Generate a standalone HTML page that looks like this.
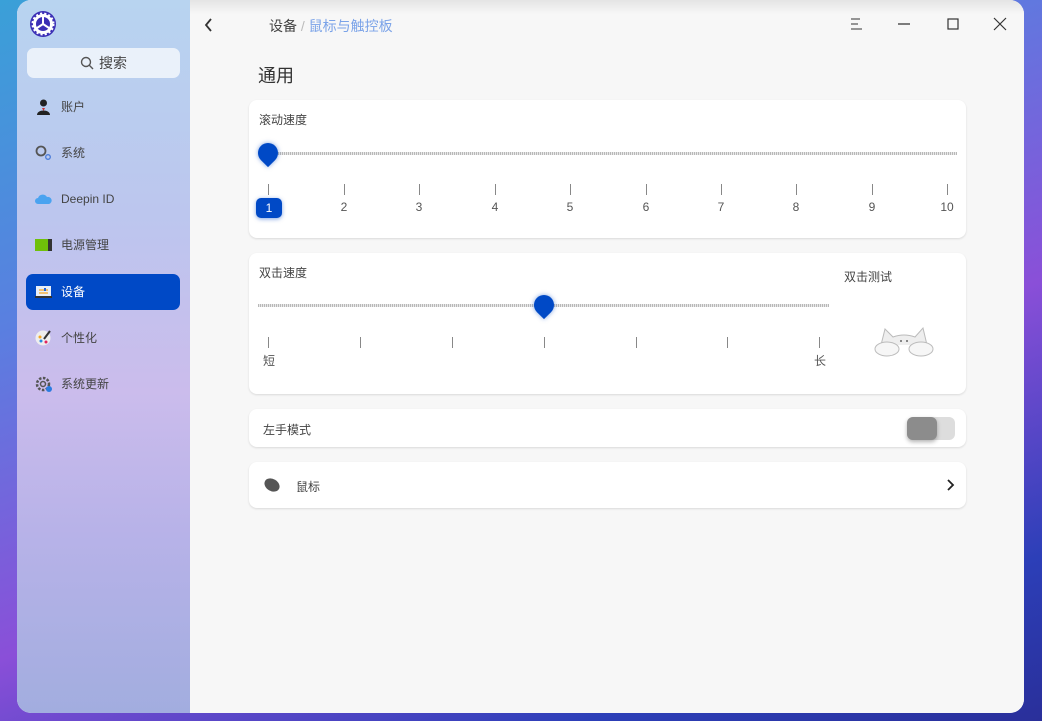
<!DOCTYPE html>
<html><head><meta charset="utf-8"><style>
*{margin:0;padding:0;box-sizing:border-box}
body{width:1042px;height:721px;overflow:hidden;font-family:"Liberation Sans","Noto Sans CJK SC",sans-serif;background:linear-gradient(160deg,#3aa0d8 0%,#5a7fe0 30%,#8a4fd8 60%,#2c3fb8 85%,#2a2f9a 100%);position:relative;font-size:12px;color:#333}
.win{position:absolute;left:17px;top:0;width:1007px;height:713px;border-radius:14px;overflow:hidden;background:#f7f7f7}
.side{position:absolute;left:0;top:0;width:173px;height:713px;background:linear-gradient(180deg,#b8d4f0 0%,#bcc6ee 30%,#cbbcec 55%,#b7b2e8 75%,#a2addf 100%)}
.main{position:absolute;left:173px;top:0;right:0;bottom:0;background:linear-gradient(180deg,#e4e4e4 0,#f7f7f7 14px,#f7f7f7 100%)}
.search{position:absolute;left:10px;top:48px;width:153px;height:30px;border-radius:7px;background:rgba(255,255,255,.7);text-align:center;line-height:30px;font-size:14px;color:#444}
.item{position:absolute;left:9px;width:154px;height:36px;border-radius:7px;line-height:36px;padding-left:35px;font-size:12px;color:#444}
.item.act{background:#0049c6;color:#fff}
.ic{position:absolute;left:9px;top:10px;width:17px;height:16px}
.card{position:absolute;left:59px;width:717px;background:#fff;border-radius:8px;box-shadow:0 1px 2px rgba(0,0,0,.12)}
.lbl{position:absolute;font-size:12px;color:#444}
.track{position:absolute;height:3px;background:repeating-linear-gradient(90deg,#b8b8b8 0 1px,#e8e8e8 1px 2px)}
.tick{position:absolute;width:1px;height:11px;background:#888}
.num{position:absolute;font-size:12px;color:#555;width:20px;margin-left:-10px;text-align:center}
.handle{position:absolute;width:20px;height:20px;background:#0049c6;border-radius:50% 50% 50% 0;transform:rotate(-45deg);box-shadow:0 0 5px rgba(0,73,198,.5)}
</style></head><body>
<div class="win">
<div class="side">
 <svg style="position:absolute;left:12px;top:10px" width="28" height="28" viewBox="0 0 28 28"><circle cx="14" cy="14" r="13" fill="#3b2fb5"/><circle cx="14" cy="14" r="10" fill="#fff" stroke="#fff" stroke-width="3" stroke-dasharray="2 2"/><circle cx="14" cy="14" r="7" fill="#3b2fb5"/><path d="M14 14L14 7M14 14L8 18M14 14L20 18" stroke="#fff" stroke-width="2"/></svg>
 <div class="search"><svg width="14" height="14" style="vertical-align:-2px;margin-right:5px"><circle cx="6" cy="6" r="4.5" fill="none" stroke="#555" stroke-width="1.4"/><path d="M9.3 9.3L13 13" stroke="#555" stroke-width="1.4"/></svg>搜索</div>
 <div class="item" style="top:89px"><svg class="ic" viewBox="0 0 17 16"><circle cx="8.5" cy="4" r="3.5" fill="#222"/><path d="M2 16c0-6 13-6 13 0z" fill="#222"/><path d="M7 9l1.5 3 1.5-3z" fill="#c33"/></svg>账户</div>
 <div class="item" style="top:135px"><svg class="ic" viewBox="0 0 17 16"><circle cx="6" cy="6" r="4.5" fill="none" stroke="#555" stroke-width="1.8"/><circle cx="13" cy="12" r="2.3" fill="none" stroke="#4a7bd8" stroke-width="1.3"/></svg>系统</div>
 <div class="item" style="top:181px"><svg class="ic" viewBox="0 0 17 16"><path d="M3 13a3 3 0 010-6 5 5 0 019-1 3.5 3.5 0 012 7z" fill="#4aa3f0"/></svg>Deepin ID</div>
 <div class="item" style="top:227px"><svg class="ic" viewBox="0 0 17 16"><rect x="0" y="2" width="13" height="12" fill="#6fc00a"/><rect x="13" y="2" width="4" height="12" fill="#333"/></svg>电源管理</div>
 <div class="item act" style="top:274px"><svg class="ic" viewBox="0 0 17 16"><rect x="1" y="2" width="15" height="10" fill="#e8eef8"/><rect x="0" y="12" width="17" height="2" fill="#333"/><path d="M4 6h9M4 9h9" stroke="#f5a623" stroke-width="1.2"/><rect x="9" y="4" width="2" height="3" fill="#2266dd"/></svg>设备</div>
 <div class="item" style="top:320px"><svg class="ic" viewBox="0 0 17 16"><circle cx="8" cy="8" r="7.5" fill="#eee"/><circle cx="5" cy="7" r="1.5" fill="#f5a623"/><circle cx="6" cy="11" r="1.5" fill="#2a8be0"/><circle cx="11" cy="12" r="1.5" fill="#e0245e"/><path d="M9 9L15 1" stroke="#333" stroke-width="2"/></svg>个性化</div>
 <div class="item" style="top:366px"><svg class="ic" viewBox="0 0 17 16"><circle cx="8" cy="8" r="6" fill="none" stroke="#555" stroke-width="2.5" stroke-dasharray="2.5 1.5"/><circle cx="8" cy="8" r="2.5" fill="none" stroke="#555" stroke-width="1.5"/><circle cx="14" cy="13" r="3" fill="#2a7be0"/></svg>系统更新</div>
</div>
<div class="main">
 <svg style="position:absolute;left:14px;top:17px" width="10" height="16"><path d="M7 2L2 8l5 6" fill="none" stroke="#333" stroke-width="1.8"/></svg>
 <div class="lbl" style="left:79px;top:16px;font-size:14px;color:#444">设备 <span style="color:#bbb">/</span> <span style="color:#7ba3e8">鼠标与触控板</span></div>
 <svg style="position:absolute;left:659px;top:17px" width="14" height="14"><path d="M2 2h9M2 7h7M2 12h11" stroke="#333" stroke-width="1"/></svg>
 <svg style="position:absolute;left:707px;top:17px" width="14" height="14"><path d="M1 7h12" stroke="#333" stroke-width="1.2"/></svg>
 <svg style="position:absolute;left:756px;top:17px" width="14" height="14"><rect x="2" y="2" width="10" height="10" fill="none" stroke="#333" stroke-width="1.2"/></svg>
 <svg style="position:absolute;left:803px;top:17px" width="14" height="14"><path d="M1 1l12 12M13 1L1 13" stroke="#333" stroke-width="1.2"/></svg>
 <div class="lbl" style="left:68px;top:62px;font-size:18px;color:#333">通用</div>

 <div class="card" style="top:100px;height:138px">
  <div class="lbl" style="left:10px;top:11px">滚动速度</div>
  <div class="track" style="left:15px;top:52px;width:693px"></div>
  <div class="handle" style="left:9px;top:43px"></div>
  <div class="tick" style="left:19px;top:84px"></div><div class="tick" style="left:95px;top:84px"></div><div class="tick" style="left:170px;top:84px"></div><div class="tick" style="left:246px;top:84px"></div><div class="tick" style="left:321px;top:84px"></div><div class="tick" style="left:397px;top:84px"></div><div class="tick" style="left:472px;top:84px"></div><div class="tick" style="left:547px;top:84px"></div><div class="tick" style="left:623px;top:84px"></div><div class="tick" style="left:698px;top:84px"></div>
  <div style="position:absolute;left:7px;top:98px;width:26px;height:20px;border-radius:5px;background:#0049c6;color:#fff;text-align:center;line-height:20px;font-size:12px;box-shadow:0 1px 4px rgba(0,73,198,.5)">1</div>
  <div class="num" style="left:95px;top:100px">2</div><div class="num" style="left:170px;top:100px">3</div><div class="num" style="left:246px;top:100px">4</div><div class="num" style="left:321px;top:100px">5</div><div class="num" style="left:397px;top:100px">6</div><div class="num" style="left:472px;top:100px">7</div><div class="num" style="left:547px;top:100px">8</div><div class="num" style="left:623px;top:100px">9</div><div class="num" style="left:698px;top:100px">10</div>
 </div>

 <div class="card" style="top:253px;height:141px">
  <div class="lbl" style="left:10px;top:11px">双击速度</div>
  <div class="lbl" style="left:595px;top:15px">双击测试</div>
  <div class="track" style="left:9px;top:51px;width:571px"></div>
  <div class="handle" style="left:285px;top:42px"></div>
  <div class="tick" style="left:19px;top:84px"></div><div class="tick" style="left:111px;top:84px"></div><div class="tick" style="left:203px;top:84px"></div><div class="tick" style="left:295px;top:84px"></div><div class="tick" style="left:387px;top:84px"></div><div class="tick" style="left:478px;top:84px"></div><div class="tick" style="left:570px;top:84px"></div>
  <div class="num" style="left:20px;top:99px">短</div><div class="num" style="left:571px;top:99px">长</div>
  <svg style="position:absolute;left:624px;top:72px" width="62" height="34" viewBox="0 0 62 34"><path d="M8 20L12 4 20 12Q31 8 42 12L50 3 54 20" fill="#eee" stroke="#bbb"/><ellipse cx="14" cy="24" rx="12" ry="7" fill="#f6f6f6" stroke="#bbb"/><ellipse cx="48" cy="24" rx="12" ry="7" fill="#f6f6f6" stroke="#bbb"/><circle cx="28" cy="16" r="1" fill="#666"/><circle cx="34" cy="16" r="1" fill="#666"/></svg>
 </div>

 <div class="card" style="top:409px;height:38px">
  <div class="lbl" style="left:14px;top:12px">左手模式</div>
  <div style="position:absolute;left:658px;top:8px;width:48px;height:23px;border-radius:6px;background:#ddd"></div>
  <div style="position:absolute;left:658px;top:8px;width:30px;height:23px;border-radius:6px;background:#8c8c8c;box-shadow:0 2px 4px rgba(0,0,0,.3)"></div>
 </div>

 <div class="card" style="top:462px;height:46px">
  <svg style="position:absolute;left:14px;top:15px" width="18" height="16"><ellipse cx="9" cy="8" rx="8" ry="6" fill="#555" transform="rotate(30 9 8)"/></svg>
  <div class="lbl" style="left:47px;top:16px">鼠标</div>
  <svg style="position:absolute;left:696px;top:16px" width="10" height="14"><path d="M3 2l5 5-5 5" fill="none" stroke="#222" stroke-width="1.8"/></svg>
 </div>
</div>
</div>
</body></html>
